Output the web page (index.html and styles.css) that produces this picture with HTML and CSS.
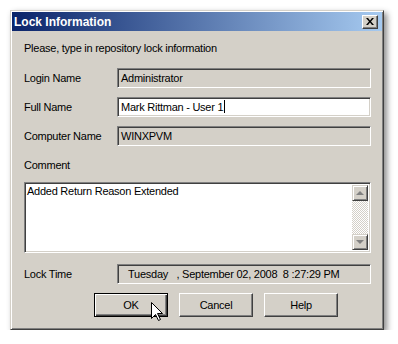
FILE: index.html
```html
<!DOCTYPE html>
<html>
<head>
<meta charset="utf-8">
<link rel="stylesheet" href="styles.css">
</head>
<body>
<div class="window">
  <div class="titlebar">
    <span class="title">Lock Information</span>
    <span class="close">
      <svg width="8" height="7" viewBox="0 0 8 7"><path d="M0 0h2l2 2.5L6 0h2L5 3.5 8 7H6L4 4.5 2 7H0l3-3.5z" fill="#000"/></svg>
    </span>
  </div>
  <div class="content">
    <div class="intro">Please, type in repository lock information</div>
    <div class="rows">
      <label class="lbl">Login Name</label>
      <div class="field ro">Administrator</div>
      <label class="lbl">Full Name</label>
      <div class="field edit">Mark Rittman - User 1<span class="caret"></span></div>
      <label class="lbl">Computer Name</label>
      <div class="field ro">WINXPVM</div>
    </div>
    <div class="lbl comment-lbl">Comment</div>
    <div class="memo">
      <div class="memo-text">Added Return Reason Extended</div>
      <div class="vscroll">
        <div class="sbtn"><span class="arrow up"></span></div>
        <div class="track"></div>
        <div class="sbtn"><span class="arrow down"></span></div>
      </div>
    </div>
    <div class="rows locktime">
      <label class="lbl">Lock Time</label>
      <div class="field ro date">Tuesday   , September 02, 2008  8 :27:29 PM</div>
    </div>
    <div class="buttons">
      <div class="btn default">OK</div>
      <div class="btn">Cancel</div>
      <div class="btn">Help</div>
    </div>
  </div>
  <svg class="pointer" width="13" height="20" viewBox="0 0 13 20"><polygon points="0.5,0.5 0.5,16.5 4.5,12.5 7.5,18.5 9.5,17.5 6.5,11.5 11.5,11.5" fill="#fff" stroke="#000" stroke-width="1"/></svg>
</div>
</body>
</html>
```
FILE: styles.css
```css
html, body {
  margin: 0;
  padding: 0;
  background: #fff;
}
body {
  font-family: "Liberation Sans", Arial, sans-serif;
  font-size: 11px;
  letter-spacing: -0.25px;
  color: #000;
}
.window {
  position: relative;
  margin: 10px 0 0 10px;
  width: 374px;
  height: 320px;
  box-sizing: border-box;
  background: #d4d0c8;
  border: 1px solid;
  border-color: #d4d0c8 #404040 #404040 #d4d0c8;
  padding: 1px;
  box-shadow: inset 1px 1px #fff, inset -1px -1px #808080, 3px 3px 6px rgba(0,0,0,0.45);
  display: flex;
  flex-direction: column;
}
.titlebar {
  height: 19px;
  flex: none;
  display: flex;
  align-items: center;
  padding: 0 4px 0 2px;
  background: linear-gradient(to right, #0a246a, #a6caf0);
}
.title {
  color: #fff;
  font-weight: bold;
  font-size: 12px;
  letter-spacing: 0;
}
.close {
  margin-left: auto;
  width: 16px;
  height: 14px;
  box-sizing: border-box;
  background: #d4d0c8;
  border: 1px solid;
  border-color: #fff #404040 #404040 #fff;
  box-shadow: inset -1px -1px #808080;
  display: flex;
  align-items: center;
  justify-content: center;
}
.close svg { display: block; margin-left: -1px; margin-top: -1px; }
.content {
  padding: 11px 11px 0 12px;
  display: flex;
  flex-direction: column;
}
.intro {
  line-height: 13px;
  height: 13px;
}
.rows {
  margin-top: 13px;
  display: grid;
  grid-template-columns: 93px 254px;
  grid-auto-rows: 20px;
  row-gap: 9px;
  align-items: center;
}
.lbl {
  line-height: 13px;
}
.field {
  height: 20px;
  box-sizing: border-box;
  border: 1px solid;
  border-color: #808080 #fff #fff #808080;
  box-shadow: inset 1px 1px #404040, inset -1px -1px #d4d0c8;
  padding: 0 0 0 3px;
  line-height: 18px;
  white-space: pre;
}
.field.ro { background: #d4d0c8; }
.field.edit { background: #fff; }
.caret {
  display: inline-block;
  width: 1px;
  height: 13px;
  background: #000;
  vertical-align: -2px;
  margin-left: 1px;
}
.comment-lbl {
  margin-top: 13px;
}
.memo {
  margin-top: 10px;
  height: 71px;
  box-sizing: border-box;
  border: 1px solid;
  border-color: #808080 #fff #fff #808080;
  box-shadow: inset 1px 1px #404040, inset -1px -1px #d4d0c8;
  padding: 2px;
  background: #fff;
  display: flex;
}
.memo-text {
  flex: 1;
  line-height: 13px;
  padding-top: 0;
}
.vscroll {
  width: 16px;
  display: flex;
  flex-direction: column;
}
.track {
  flex: 1;
  background-color: #fff;
  background-image: repeating-conic-gradient(#d4d0c8 0 25%, #fff 0 50%);
  background-size: 2px 2px;
}
.sbtn {
  height: 16px;
  box-sizing: border-box;
  background: #d4d0c8;
  border: 1px solid;
  border-color: #d4d0c8 #404040 #404040 #d4d0c8;
  box-shadow: inset 1px 1px #fff, inset -1px -1px #808080;
  display: flex;
  align-items: center;
  justify-content: center;
}
.arrow {
  width: 0;
  height: 0;
  border-left: 4px solid transparent;
  border-right: 4px solid transparent;
}
.arrow.up { border-bottom: 4px solid #808080; }
.arrow.down { border-top: 4px solid #808080; }
.locktime {
  margin-top: 11px;
}
.date {
  padding-left: 10px;
}
.buttons {
  margin-top: 9px;
  padding-left: 70px;
  display: flex;
  gap: 11px;
}
.btn {
  width: 74px;
  height: 24px;
  box-sizing: border-box;
  border: 1px solid;
  border-color: #fff #404040 #404040 #fff;
  box-shadow: inset -1px -1px #808080;
  display: flex;
  align-items: center;
  justify-content: center;
  padding-bottom: 1px;
}
.btn.default {
  border-color: #000;
  box-shadow: inset 1px 1px #fff, inset -1px -1px #404040, inset -2px -2px #808080;
}
.pointer {
  position: absolute;
  left: 140px;
  top: 291px;
}
```
